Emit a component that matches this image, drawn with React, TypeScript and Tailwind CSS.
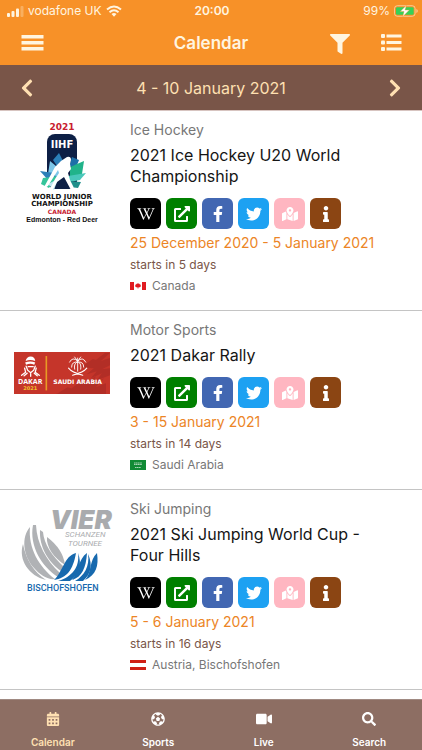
import type { ReactNode } from "react";
import type { IconType } from "react-icons";
import {
  FaCalendarAlt,
  FaChevronLeft,
  FaChevronRight,
  FaExternalLinkAlt,
  FaFacebookF,
  FaFilter,
  FaFutbol,
  FaInfo,
  FaMapMarkedAlt,
  FaSearch,
  FaTwitter,
  FaVideo,
  FaWikipediaW,
} from "react-icons/fa";

interface SportEvent {
  sport: string;
  title: string;
  dates: string;
  startsIn: string;
  place: string;
  logo: ReactNode;
  logoSpacing: string;
  flag: ReactNode;
}

const eventLinks: Array<{ label: string; icon: IconType; color: string; size: string }> = [
  { label: "Wikipedia", icon: FaWikipediaW, color: "bg-black", size: "size-4.5" },
  { label: "Website", icon: FaExternalLinkAlt, color: "bg-[#008000]", size: "size-4" },
  { label: "Facebook", icon: FaFacebookF, color: "bg-[#4267b2]", size: "size-4" },
  { label: "Twitter", icon: FaTwitter, color: "bg-[#1da1f2]", size: "size-4" },
  { label: "Map", icon: FaMapMarkedAlt, color: "bg-[#ffb6c1]", size: "size-4" },
  { label: "Info", icon: FaInfo, color: "bg-[#8b4513]", size: "size-4" },
];

const tabs: Array<{ label: string; icon: IconType; active?: boolean; size: string }> = [
  { label: "Calendar", icon: FaCalendarAlt, active: true, size: "size-3.5" },
  { label: "Sports", icon: FaFutbol, size: "size-3.5" },
  { label: "Live", icon: FaVideo, size: "size-4" },
  { label: "Search", icon: FaSearch, size: "size-3.5" },
];

function HockeyLogo() {
  return (
    <svg viewBox="2 0 100 106" className="w-25" role="img" aria-label="IIHF World Junior Championship">
      <g textAnchor="middle" fontWeight="700">
        <text x="52" y="10" fontSize="9" fill="#c8202f" fontFamily="DejaVu Sans, sans-serif">2021</text>
        <rect x="37" y="14" width="30" height="55" rx="8" fill="#0d1f45" />
        <text x="52" y="28" fontSize="10" fill="#fff" fontFamily="DejaVu Sans, sans-serif">IIHF</text>
        <path d="M49 33l4 8-4 8-6-9z" fill="#2b7fb8" />
        <path d="M40 41l12 10-5 9-9-6z" fill="#7cc6e8" />
        <path d="M30 51l14 2 4 8-10-1z" fill="#2b7fb8" />
        <path d="M33 58l16-2-10 12-8-4z" fill="#35c49a" />
        <path d="M38 64l10-5-4 11z" fill="#bfe6f2" />
        <path d="M62 37l-3 10 8-2 2-5z" fill="#1d6fa8" />
        <path d="M60 47l14-6-2 13-12 4z" fill="#21b38a" />
        <path d="M58 56l18-3-6 7-10 2z" fill="#49c7ba" />
        <path d="M59 61l12 1-3 6-8-1z" fill="#1f8f8a" />
        <path
          d="M57 37q4-1 4 3l-1 4 1 5-3 4 2 7 4 8h4v2h-7l-7-13-7 5-4 7-6 1v-1l4-2 4-8 4-6-1-3-10 16-5 3 12-22 6-6z"
          fill="#fff"
        />
        <text x="52" y="79" fontSize="7" fill="#111" fontFamily="DejaVu Sans, sans-serif">WORLD JUNIOR</text>
        <text x="52" y="86" fontSize="7" fill="#111" fontFamily="DejaVu Sans, sans-serif">CHAMPIONSHIP</text>
        <text x="52" y="94" fontSize="6" fill="#c8202f" fontFamily="DejaVu Sans, sans-serif">CANADA</text>
        <text x="52" y="102" fontSize="7" fill="#111" fontFamily="Liberation Sans, sans-serif">Edmonton - Red Deer</text>
      </g>
    </svg>
  );
}

function DakarLogo() {
  return (
    <svg viewBox="0 0 95 42" className="w-24" role="img" aria-label="Dakar 2021 Saudi Arabia">
      <path d="M0 0h95v42H0z" fill="#c5352a" />
      <path
        d="M43 41l10-6 4 1 9-7 5 2 10-7-4 8 12-6-8 9 10-4v11H40zM66 15l12-8 3 1 9-7h5l-9 8 9-3v7l-8 4 8-1v7l-13 5 5-7-11 5 6-7-10 3 7-6z"
        fill="#a52a24"
        opacity=".6"
      />
      <path d="M32 4v34" stroke="#e79a25" strokeWidth="1.600" />
      <path d="M11.500 9q1-4.500 5-4.500t4.500 4.500q-5-2-9.500 0z" fill="#fff" />
      <path d="M11 10.500q5-2 10 0l-1 2q-4-1.500-8 0z" fill="#fff" />
      <g fill="none" stroke="#fff" strokeLinecap="round">
        <path d="M12 14l1.500 4 3 2.500 3-2.500 1.500-4M10.500 16l1 4-4 3M22 16l-1 4 4 3M13 21l-3 2.500M20 21l3 2.500M16.500 21.500V24M14 14.500h5" strokeWidth="1.300" />
        <path d="M63 6v13M63 9q-5-5-8 1M63 9q5-5 8 1M63 10q-6-1-6 5M63 10q6-1 6 5M62 10q-3 2-2 7M64 10q3 2 2 7M60 5l3 4 3-4" strokeWidth=".9" />
        <path d="M54 16q3 4 14 7M72 16q-3 4-14 7" strokeWidth="1.100" />
      </g>
      <g textAnchor="middle" fontWeight="700">
        <text x="16" y="32" fontSize="7" fill="#fff" fontFamily="Open Sans, sans-serif">DAKAR</text>
        <text x="16" y="38" fontSize="5" fill="#f3c12c" fontFamily="DejaVu Sans, sans-serif">2021</text>
        <text x="63" y="32" fontSize="6" fill="#fff" fontFamily="DejaVu Sans, sans-serif">SAUDI ARABIA</text>
      </g>
    </svg>
  );
}

function FourHillsLogo() {
  return (
    <svg viewBox="0 9 104 92" className="w-26" role="img" aria-label="Vierschanzentournee Bischofshofen">
      <text x="40" y="35" fontSize="26" fontWeight="900" fontStyle="italic" fill="#a9abae" fontFamily="Inter, sans-serif">VIER</text>
      <g fontSize="8" fontStyle="italic" fill="#a9abae" fontFamily="Roboto, sans-serif">
        <text x="55" y="43">SCHANZEN</text>
        <text x="58" y="52">TOURNEE</text>
      </g>
      <g fill="#b0b2b5">
        <path d="M13 50C8 66 19 82 36 86C24 78 16 66 13 50z" />
        <path d="M20 33C11 43 13 62 24 74C30 81 38 86 45 85C29 73 18 54 20 33z" />
        <path d="M23 31C19 52 32 73 48 83L50 79C36 66 27 50 26 31z" />
        <path d="M30 36C29 52 38 68 51 77L54 73C42 62 34 50 33 38z" />
        <path d="M37 43C36 53 44 64 55 71Q53 55 37 43z" />
      </g>
      <g fill="#1769ae">
        <path d="M66 59C54 62 53 78 44 86C57 84 63 76 66 59z" />
        <path d="M68 59C70 73 62 83 48 87H60C70 80 72 70 68 59z" />
        <path d="M77 59C68 65 69 78 62 86C72 83 76 74 77 59z" />
        <path d="M78 60C80 72 74 82 65 87H73C81 80 83 71 78 60z" />
        <path d="M87 59C79 66 82 79 75 86C86 81 89 72 87 59z" />
      </g>
      <text x="17" y="97" fontSize="9" fontWeight="500" fill="#1769ae" fontFamily="Roboto, sans-serif">BISCHOFSHOFEN</text>
    </svg>
  );
}

const events: SportEvent[] = [
  {
    sport: "Ice Hockey",
    title: "2021 Ice Hockey U20 World Championship",
    dates: "25 December 2020 - 5 January 2021",
    startsIn: "starts in 5 days",
    place: "Canada",
    logo: <HockeyLogo />,
    logoSpacing: "pt-0",
    flag: (
      <svg viewBox="0 0 16 8" className="w-4" aria-hidden="true">
        <path d="M0 0h16v8H0z" fill="#fff" />
        <path d="M0 0h4v8H0zM12 0h4v8h-4zM8 1l1 1 1-.3-.2 1.300 1.200-.4-.4 1.300.5.400-2 1.200H8.200V7h-.4V5.500H6.900l-2-1.200.5-.4L5 2.600l1.200.4L6 1.700 7 2z" fill="#e01b22" />
      </svg>
    ),
  },
  {
    sport: "Motor Sports",
    title: "2021 Dakar Rally",
    dates: "3 - 15 January 2021",
    startsIn: "starts in 14 days",
    place: "Saudi Arabia",
    logo: <DakarLogo />,
    logoSpacing: "pt-8",
    flag: (
      <svg viewBox="0 0 16 10" className="w-4" aria-hidden="true">
        <path d="M0 0h16v10H0z" fill="#118a35" />
        <path d="M4 3h8M4 4.500h8M5 7.500h6" stroke="#fff" strokeWidth=".9" strokeDasharray="1.500 .3" opacity=".7" />
      </svg>
    ),
  },
  {
    sport: "Ski Jumping",
    title: "2021 Ski Jumping World Cup - Four Hills",
    dates: "5 - 6 January 2021",
    startsIn: "starts in 16 days",
    place: "Austria, Bischofshofen",
    logo: <FourHillsLogo />,
    logoSpacing: "pt-1",
    flag: (
      <svg viewBox="0 0 16 10" className="w-4" aria-hidden="true">
        <path d="M0 0h16v10H0z" fill="#fff" />
        <path d="M0 0h16v3H0zM0 7h16v3H0z" fill="#cf2016" />
      </svg>
    ),
  },
];

function StatusBar() {
  return (
    <div className="grid h-5.5 grid-cols-3 items-center pl-1.5 pr-1 text-xs">
      <div className="flex items-center gap-1">
        <svg viewBox="0 0 18 12" className="h-3 w-4.5" fill="currentColor" aria-hidden="true">
          <rect x="1" y="8" width="3" height="4" rx="1" />
          <rect x="5.500" y="6" width="3" height="6" rx="1" />
          <rect x="10" y="3.500" width="3" height="8.500" rx="1" />
          <rect x="14.500" y="1" width="3" height="11" rx="1" opacity=".3" />
        </svg>
        <span className="whitespace-nowrap">vodafone UK</span>
        <svg viewBox="0 0 16 12" className="h-3 w-4" fill="none" stroke="currentColor" strokeWidth="2" aria-hidden="true">
          <path d="M1 4.500q7-6 14 0M3.500 7.300q4.500-4 9 0" />
          <path d="M5.500 9q2.500-2 5 0L8 11.700z" fill="currentColor" stroke="none" />
        </svg>
      </div>
      <span className="text-center font-semibold">20:00</span>
      <div className="flex items-center justify-end gap-1">
        <span>99%</span>
        <svg viewBox="0 0 25 12" className="h-3 w-6" aria-hidden="true">
          <rect x=".5" y=".5" width="21.500" height="11" rx="3" fill="none" stroke="#fff5e0" opacity=".6" />
          <rect x="2" y="2" width="18.500" height="8" rx="1.500" fill="#35d159" />
          <path d="M23.300 4v4q1.500-.5 1.500-2t-1.500-2z" fill="#fff5e0" opacity=".6" />
          <path d="M13 0L6.500 6.500h4L9 12l7-7h-4.500z" fill="#fff" stroke="#f79128" strokeWidth=".4" />
        </svg>
      </div>
    </div>
  );
}

function EventCard({ event }: { event: SportEvent }) {
  return (
    <article className="flex border-b border-[#c4c4c4] pb-4 pt-2.25">
      <div className="flex w-32.5 shrink-0 flex-col items-center pr-1.5">
        <div className={event.logoSpacing}>{event.logo}</div>
      </div>
      <div className="min-w-0 flex-1 pr-4">
        <p className="text-sm leading-5 text-[#777]">{event.sport}</p>
        <h2 className="mt-1.25 max-w-62 text-base leading-5.25 text-[#151515]">{event.title}</h2>
        <div className="mt-2.75 flex gap-1.25">
          {eventLinks.map((link) => (
            <a
              key={link.label}
              href="#"
              aria-label={link.label}
              className={`flex size-7.75 items-center justify-center rounded-md text-white ${link.color}`}
            >
              <link.icon className={link.size} />
            </a>
          ))}
        </div>
        <p className="mt-1 text-sm leading-5 text-[#ec8526]">{event.dates}</p>
        <p className="mt-1 text-xs leading-4 text-[#795548]">{event.startsIn}</p>
        <p className="mt-1.25 flex items-center gap-1.5 text-xs leading-4 text-[#777]">
          {event.flag}
          {event.place}
        </p>
      </div>
    </article>
  );
}

export default function App() {
  return (
    <div className="flex min-h-screen flex-col bg-white font-['Inter',sans-serif]">
      <header className="bg-[#f79128] text-[#fff5e0]">
        <StatusBar />
        <div className="flex h-10.75 items-center justify-between px-5">
          <button type="button" aria-label="Menu" className="flex w-20 items-center">
            <svg viewBox="0 0 24 20" className="w-6" fill="currentColor" aria-hidden="true">
              <path d="M1.500 1h22v3.500h-22zM1.500 7h22v3.500h-22zM1.500 13h22v3.500h-22z" />
            </svg>
          </button>
          <h1 className="text-[17px] font-semibold">Calendar</h1>
          <div className="flex w-20 items-center justify-end gap-7.5">
            <button type="button" aria-label="Filter">
              <FaFilter className="size-5" />
            </button>
            <button type="button" aria-label="List view">
              <svg viewBox="0 0 22 20" className="w-5.5" fill="currentColor" aria-hidden="true">
                <rect x="1" y="0" width="4" height="4" rx="1" />
                <rect x="1" y="6.500" width="4" height="4" rx="1" />
                <rect x="1" y="13" width="4" height="4" rx="1" />
                <path d="M6.500.5h15v3h-15zM6.500 7h15v3h-15zM6.500 13.500h15v3h-15z" />
              </svg>
            </button>
          </div>
        </div>
      </header>

      <div className="flex h-11.5 items-center justify-between border-b border-[#d7c4c0] bg-[#795548] px-5 text-[#ffe0b2]">
        <button type="button" aria-label="Previous week">
          <FaChevronLeft className="h-5 w-3.5" />
        </button>
        <p className="text-base">4 - 10 January 2021</p>
        <button type="button" aria-label="Next week">
          <FaChevronRight className="h-5 w-3.5" />
        </button>
      </div>

      <main className="flex-1">
        {events.map((event) => (
          <EventCard key={event.title} event={event} />
        ))}
      </main>

      <nav className="sticky bottom-0 grid h-12.75 grid-cols-4 border-t border-[#a08a82] bg-[#8d6e63]">
        {tabs.map((tab) => (
          <a
            key={tab.label}
            href="#"
            className={`flex flex-col items-center gap-2 pt-3 text-[10px] font-semibold leading-4 ${
              tab.active ? "text-[#ffe0b2]" : "text-white"
            }`}
          >
            <span className="flex h-3.5 items-center">
              <tab.icon className={tab.size} />
            </span>
            {tab.label}
          </a>
        ))}
      </nav>
    </div>
  );
}
